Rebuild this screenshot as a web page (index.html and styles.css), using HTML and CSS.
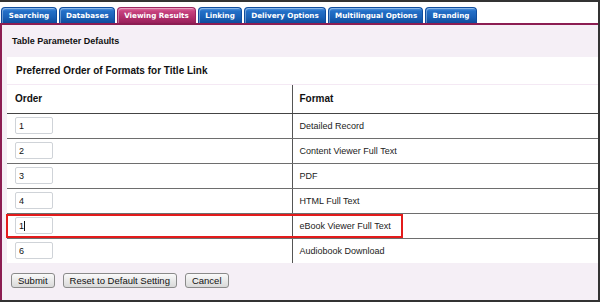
FILE: index.html
```html
<!DOCTYPE html>
<html>
<head>
<meta charset="utf-8">
<link rel="stylesheet" href="styles.css">
</head>
<body>
<div class="frame">
  <div class="tabbar">
    <div class="tab">Searching</div>
    <div class="tab">Databases</div>
    <div class="tab active">Viewing Results</div>
    <div class="tab">Linking</div>
    <div class="tab">Delivery Options</div>
    <div class="tab">Multilingual Options</div>
    <div class="tab">Branding</div>
  </div>
  <div class="panel">
    <div class="panel-title">Table Parameter Defaults</div>
    <div class="box">
      <div class="caption">Preferred Order of Formats for Title Link</div>
      <table class="grid">
        <thead>
          <tr><th class="c1">Order</th><th class="c2">Format</th></tr>
        </thead>
        <tbody>
          <tr><td class="c1"><input class="ord" type="text" value="1"></td><td class="c2">Detailed Record</td></tr>
          <tr><td class="c1"><input class="ord" type="text" value="2"></td><td class="c2">Content Viewer Full Text</td></tr>
          <tr><td class="c1"><input class="ord" type="text" value="3"></td><td class="c2">PDF</td></tr>
          <tr><td class="c1"><input class="ord" type="text" value="4"></td><td class="c2">HTML Full Text</td></tr>
          <tr><td class="c1"><span class="field-wrap"><input class="ord" type="text" value="1"><span class="caret"></span></span></td><td class="c2">eBook Viewer Full Text</td></tr>
          <tr class="last"><td class="c1"><input class="ord" type="text" value="6"></td><td class="c2">Audiobook Download</td></tr>
        </tbody>
      </table>
    </div>
    <div class="actions">
      <button class="btn">Submit</button>
      <button class="btn">Reset to Default Setting</button>
      <button class="btn">Cancel</button>
    </div>
  </div>
  <div class="highlight"></div>
</div>
</body>
</html>
```
FILE: styles.css
```css
* { box-sizing: border-box; }
html, body { margin: 0; padding: 0; background: #fff; }
body { width: 600px; height: 302px; overflow: hidden; font-family: "Liberation Sans", Arial, sans-serif; }

.frame {
  position: relative;
  width: 600px;
  height: 302px;
  border-top: 2px solid #333;
  border-right: 2px solid #333;
  border-bottom: 2px solid #333;
  display: flex;
  flex-direction: column;
}

.tabbar {
  display: flex;
  align-items: flex-end;
  gap: 2px;
  padding: 5px 0 0 1px;
  height: 23px;
  border-bottom: 2px solid #8c1d52;
  flex: none;
}
.tab {
  height: 16px;
  line-height: 16px;
  padding: 0 6px;
  font-family: "DejaVu Sans", Verdana, sans-serif;
  font-weight: bold;
  font-size: 7.2px;
  color: #fff;
  text-align: center;
  white-space: nowrap;
  border-radius: 4px 4px 0 0;
  background: linear-gradient(#5a9be2 0, #2470c8 3px, #1a62b8 60%, #0e4c9c 100%);
  border: 1px solid #0f4d9e;
  border-bottom: none;
  box-shadow: inset 1px 1px 0 rgba(255,255,255,0.35);
}
.tab:nth-child(1) { width: 56px; }
.tab:nth-child(2) { width: 56px; }
.tab:nth-child(3) { width: 79px; }
.tab:nth-child(4) { width: 44px; }
.tab:nth-child(5) { width: 82px; }
.tab:nth-child(6) { width: 95px; }
.tab:nth-child(7) { width: 52px; }
.tab.active {
  background: linear-gradient(#e27aa8 0, #c8437f 3px, #b3306c 60%, #98205a 100%);
  border-color: #9a2560;
}

.panel {
  flex: 1;
  background: #f5eff6;
  border-left: 2px solid #8c1d52;
  display: flex;
  flex-direction: column;
}
.panel-title {
  height: 32px;
  line-height: 32px;
  padding-left: 10px;
  font-weight: bold;
  font-size: 9px;
  color: #111;
}
.box {
  margin-left: 5px;
  background: #fff;
}
.caption {
  height: 28px;
  line-height: 27px;
  padding-left: 9px;
  font-weight: bold;
  font-size: 10px;
  color: #111;
  border-bottom: 1px solid #f4e9f4;
}
.grid {
  width: 100%;
  border-collapse: collapse;
  font-size: 9px;
  color: #222;
}
.grid th {
  height: 28px;
  text-align: left;
  font-weight: bold;
  font-size: 10px;
  color: #111;
  border-bottom: 1px solid #444;
  padding: 0;
}
.grid td {
  height: 25px;
  padding: 0;
  border-bottom: 1px solid #6e6e6e;
}
.grid tr.last td { border-bottom: none; }
.c1 { width: 285px; padding-left: 8px !important; }
.c2 { border-left: 1px solid #555; padding-left: 7px !important; }

.ord {
  display: block;
  width: 38px;
  height: 17px;
  border: 1px solid #cfd3d8;
  border-radius: 2px;
  padding: 0 0 0 3px;
  font-family: "Liberation Sans", Arial, sans-serif;
  font-size: 9px;
  color: #111;
  background: #fff;
  outline: none;
}
.field-wrap { position: relative; display: block; width: 38px; }
.caret {
  position: absolute;
  left: 9px;
  top: 4px;
  width: 1px;
  height: 10px;
  background: #111;
}

.actions {
  display: flex;
  gap: 8px;
  padding: 10px 0 0 9px;
}
.btn {
  height: 15px;
  padding: 0 6px;
  font-family: "Liberation Sans", Arial, sans-serif;
  font-size: 9.5px;
  color: #111;
  border: 1px solid #8a8a8a;
  border-radius: 3px;
  background: linear-gradient(#fafafa, #e9e9e9 50%, #d9d9d9);
  line-height: 13px;
}

.highlight {
  position: absolute;
  left: 6px;
  top: 212px;
  width: 397px;
  height: 24px;
  border: 2px solid #e31b1b;
  pointer-events: none;
}
```
